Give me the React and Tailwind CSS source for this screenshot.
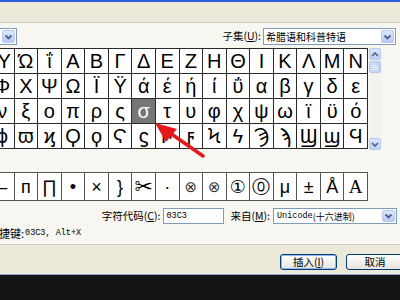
import React from "react";

const rows = [
  ["Ύ", "Ώ", "ΐ", "Α", "Β", "Γ", "Δ", "Ε", "Ζ", "Η", "Θ", "Ι", "Κ", "Λ", "Μ", "Ν"],
  ["Φ", "Χ", "Ψ", "Ω", "Ϊ", "Ϋ", "ά", "έ", "ή", "ί", "ΰ", "α", "β", "γ", "δ", "ε"],
  ["ν", "ξ", "ο", "π", "ρ", "ς", "σ", "τ", "υ", "φ", "χ", "ψ", "ω", "ϊ", "ϋ", "ό"],
  ["ϕ", "ϖ", "ϗ", "Ϙ", "ϙ", "Ϛ", "ϛ", "Ϝ", "ϝ", "Ϟ", "ϟ", "Ϡ", "ϡ", "Ϣ", "ϣ", "Ϥ"],
];

const recent = ["–", "п", "∏", "•", "×", "}", "✂", "·", "⊗", "⊗", "①", "⓪", "μ", "±", "Å", "A"];

function DropButton() {
  return (
    <div className="w-[13px] h-full rounded-[2px] border border-[#b9c9f0] bg-gradient-to-b from-[#dce6fd] to-[#b7cbf7] flex items-center justify-center">
      <svg width="9" height="6" viewBox="0 0 9 6">
        <path d="M1.5 1.5 L4.5 4.5 L7.5 1.5" fill="none" stroke="#4d6185" strokeWidth="1.8" />
      </svg>
    </div>
  );
}

function ScrollArrow({ up }) {
  return (
    <div className="h-[12px] rounded-[2px] border border-[#b9c9f0] bg-gradient-to-b from-[#dce6fd] to-[#bccff8] flex items-center justify-center">
      <svg width="8" height="5" viewBox="0 0 8 5">
        <path
          d={up ? "M1 4 L4 1 L7 4" : "M1 1 L4 4 L7 1"}
          fill="none"
          stroke="#4d6185"
          strokeWidth="1.6"
        />
      </svg>
    </div>
  );
}

export default function App() {
  return (
    <div className="relative w-[400px] h-[300px] overflow-hidden bg-[#141414] font-['Noto_Sans_CJK_SC',sans-serif] text-black">
      <div className="h-[2px] bg-[#2a5bd8]" />
      <div className="h-[20px] bg-[#ece9d8]" />

      {/* tab page */}
      <div className="h-[223px] bg-[#f7f6f1] border-t border-b border-[#cfcdc2] flex flex-col">
        {/* font / subset row */}
        <div className="mt-[5px] h-[17px] flex items-stretch">
          <div className="w-[17px] border border-l-0 border-[#7f9db9] bg-white p-px flex justify-end">
            <DropButton />
          </div>
          <div className="flex-1" />
          <div className="flex items-center text-[10.5px] leading-none mr-[2px]">
            子集(<span className="underline">U</span>):
          </div>
          <div className="w-[133px] mr-[4px] border border-[#7f9db9] bg-white p-px flex items-stretch">
            <div className="flex-1 flex items-center pl-[1px] text-[10px] leading-none">希腊语和科普特语</div>
            <DropButton />
          </div>
        </div>

        {/* symbol grid + scrollbar */}
        <div className="mt-[3px] flex items-start">
          <div className="ml-[-10px] w-[378px] grid grid-cols-[repeat(16,minmax(0,1fr))] border-l border-t border-[#2a2a2a] bg-white font-['Liberation_Sans','DejaVu_Sans',sans-serif]">
            {rows.flat().map((ch, i) => (
              <div
                key={i}
                className={`h-[25px] border-r border-b border-[#2a2a2a] flex items-center justify-center text-[20px] leading-none ${
                  i === 38 ? "bg-[#767676] text-white" : ""
                }`}
              >
                {ch}
              </div>
            ))}
          </div>
          <div className="ml-px w-[12px] h-[102px] flex flex-col bg-[#f3f2ee]">
            <ScrollArrow up />
            <div className="mt-px h-[12px] rounded-[2px] border border-[#b9c9f0] bg-gradient-to-r from-[#cddbfc] to-[#bccff8] flex flex-col items-center justify-center gap-px">
              <div className="w-[6px] h-px bg-[#eef3fe]" />
              <div className="w-[6px] h-px bg-[#eef3fe]" />
              <div className="w-[6px] h-px bg-[#eef3fe]" />
            </div>
            <div className="flex-1" />
            <ScrollArrow />
          </div>
        </div>

        {/* recently used */}
        <div className="mt-[22px] ml-[-10px] w-[378px] grid grid-cols-[repeat(16,minmax(0,1fr))] border-l border-t border-[#555] bg-white font-['Liberation_Sans','DejaVu_Sans',sans-serif]">
          {recent.map((ch, i) => (
            <div
              key={i}
              className={`h-[28px] border-r border-b border-[#555] flex items-center justify-center leading-none ${
                i === 15
                  ? "font-['Liberation_Serif',serif] text-[19px]"
                  : i === 6
                  ? "text-[22px]"
                  : i === 8 || i === 9
                  ? "text-[15px] text-[#333]"
                  : "text-[18px]"
              }`}
            >
              {ch}
            </div>
          ))}
        </div>

        {/* character code row */}
        <div className="mt-[7px] h-[16px] flex items-stretch justify-end pr-[3px]">
          <div className="flex items-center text-[10.5px] leading-none">
            字符代码(<span className="underline">C</span>):
          </div>
          <div className="ml-[3px] w-[61px] border border-[#7f9db9] bg-white flex items-center pl-[2px] font-['Liberation_Mono',monospace] text-[8.5px] leading-none">
            03C3
          </div>
          <div className="ml-[6px] flex items-center text-[10.5px] leading-none">
            来自(<span className="underline">M</span>):
          </div>
          <div className="ml-[3px] w-[124px] border border-[#7f9db9] bg-white p-px flex items-stretch">
            <div className="flex-1 flex items-center pl-[2px] leading-none">
              <span className="font-['Liberation_Mono',monospace] text-[8.5px]">Unicode</span>
              <span className="text-[9px]">(十六进制)</span>
            </div>
            <DropButton />
          </div>
        </div>

        {/* shortcut */}
        <div className="mt-[4px] ml-[-12px] flex items-center text-[11px] leading-none">
          <span>快捷键:</span>
          <span className="ml-px font-['Liberation_Mono',monospace] text-[8.5px]">03C3, Alt+X</span>
        </div>
      </div>

      {/* button strip */}
      <div className="h-[29px] bg-[#ece9d8] flex justify-end items-start pt-[9px]">
        <div className="w-[57px] h-[16px] rounded-[3px] border border-[#003c74] bg-gradient-to-b from-white to-[#e6e4dc] shadow-[inset_0_0_0_1px_#9ab6ee] flex items-center justify-center text-[10.5px] leading-none">
          插入(<span className="underline">I</span>)
        </div>
        <div className="ml-[9px] w-[58px] mr-[-4px] h-[16px] rounded-[3px] border border-[#003c74] bg-gradient-to-b from-white to-[#e6e4dc] flex items-center justify-center text-[10.5px] leading-none">
          取消
        </div>
      </div>
      <div className="h-px bg-[#8aa4e6]" />

      {/* red annotation arrow */}
      <svg className="absolute left-0 top-0 pointer-events-none" width="400" height="300" viewBox="0 0 400 300">
        <line x1="203" y1="156" x2="170" y2="133" stroke="#e3191c" strokeWidth="3.5" strokeLinecap="round" />
        <polygon points="155,123 177,129 166,142" fill="#e3191c" />
      </svg>
    </div>
  );
}
